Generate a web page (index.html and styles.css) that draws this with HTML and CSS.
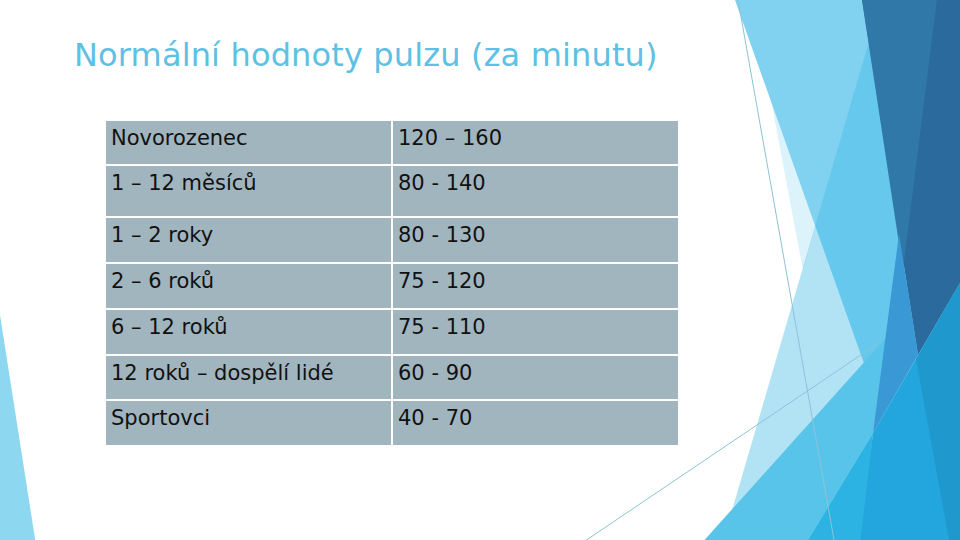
FILE: index.html
```html
<!DOCTYPE html>
<html lang="cs">
<head>
<meta charset="utf-8">
<title>Normální hodnoty pulzu</title>
<link rel="stylesheet" href="styles.css">
</head>
<body>
<div class="slide">
  <svg class="deco" viewBox="0 0 960 540" width="960" height="540" aria-hidden="true">
    <polygon points="752,0 803,270 880,0" fill="#dcf3fc"/>
    <polygon points="735,0 862,0 918,355 877,400" fill="#80d2f0"/>
    <polygon points="868,45 700,620 960,620 960,45" fill="#3bb9e6" fill-opacity="0.4"/>
    <polygon points="862,0 960,0 960,283 918,355" fill="#2a6a9c"/>
    <polygon points="862,0 937,0 903,270" fill="#3078a8"/>
    <polygon points="700,545 893,330 873,433 805,545" fill="#58c4ea"/>
    <polygon points="899,234 918,355 873,433" fill="#3a98d4"/>
    <polygon points="873,433 862,545 805,545" fill="#2db3e3"/>
    <polygon points="873,433 960,283 960,545 860,545" fill="#22a6dd"/>
    <polygon points="916,359 960,283 960,545 950,545" fill="#1e98cd"/>
    <polygon points="0,315 36,545 0,545" fill="#8dd7f1"/>
    <line x1="738" y1="0" x2="834" y2="540" stroke="#8cc3d6" stroke-width="1"/>
    <line x1="585" y1="541" x2="880" y2="342" stroke="#8cc3d6" stroke-width="1"/>
  </svg>
  <div class="content">
    <h1 class="title">Normální hodnoty pulzu (za minutu)</h1>
    <div class="table">
      <div class="cell r1">Novorozenec</div><div class="cell r1">120 – 160</div>
      <div class="cell r2">1 – 12 měsíců</div><div class="cell r2">80 - 140</div>
      <div class="cell r3">1 – 2 roky</div><div class="cell r3">80 - 130</div>
      <div class="cell r4">2 – 6 roků</div><div class="cell r4">75 - 120</div>
      <div class="cell r5">6 – 12 roků</div><div class="cell r5">75 - 110</div>
      <div class="cell r6">12 roků – dospělí lidé</div><div class="cell r6">60 - 90</div>
      <div class="cell r7">Sportovci</div><div class="cell r7">40 - 70</div>
    </div>
  </div>
</div>
</body>
</html>
```
FILE: styles.css
```css
* { box-sizing: border-box; }
html, body {
  margin: 0;
  padding: 0;
  background: #ffffff;
}
.slide {
  position: relative;
  width: 960px;
  height: 540px;
  overflow: hidden;
  background: #ffffff;
  font-family: "DejaVu Sans", "Liberation Sans", sans-serif;
}
.deco {
  position: absolute;
  left: 0;
  top: 0;
  display: block;
}
.content {
  position: relative;
  display: flex;
  flex-direction: column;
  padding: 36px 0 0 74px;
}
.title {
  margin: 0;
  font-weight: normal;
  font-size: 32px;
  letter-spacing: 0.15px;
  line-height: 38px;
  height: 38px;
  color: #5ec1e3;
  white-space: nowrap;
}
.table {
  margin: 47px 0 0 32px;
  display: grid;
  grid-template-columns: 285px 285px;
  grid-template-rows: 43px 50px 44px 44px 44px 43px 44px;
  gap: 2px;
  width: 572px;
}
.cell {
  background: #a1b5bf;
  color: #111111;
  font-size: 21px;
  line-height: 25px;
  padding: 5px 0 0 5px;
  white-space: nowrap;
}
```
